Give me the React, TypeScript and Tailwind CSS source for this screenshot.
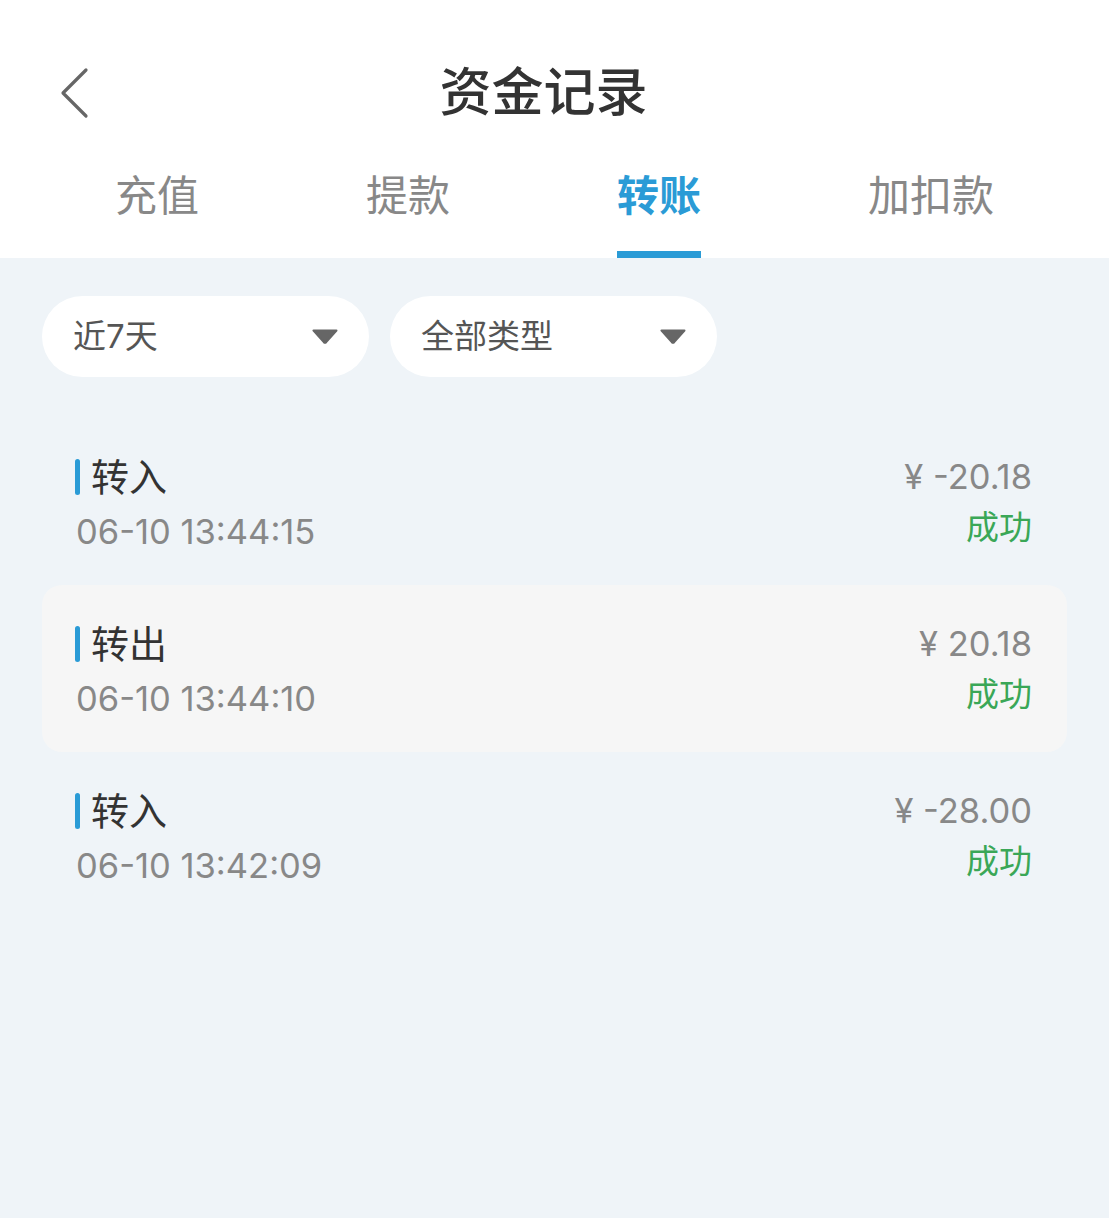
import React from 'react';

const font = { fontFamily: '"Inter", "Noto Sans CJK SC", sans-serif' };

type Rec = { title: string; time: string; amount: string; status: string; active?: boolean };

const records: Rec[] = [
  { title: '转入', time: '06-10 13:44:15', amount: '¥ -20.18', status: '成功' },
  { title: '转出', time: '06-10 13:44:10', amount: '¥ 20.18', status: '成功', active: true },
  { title: '转入', time: '06-10 13:42:09', amount: '¥ -28.00', status: '成功' },
];

const tabs = ['充值', '提款', '转账', '加扣款'];

const Caret: React.FC = () => (
  <svg width="26" height="15" viewBox="0 0 26 15" className="shrink-0">
    <path d="M1.5 1.5 H24.5 L14.2 13.2 Q13 14.4 11.8 13.2 Z" fill="#666" stroke="#666" strokeWidth="2" strokeLinejoin="round" />
  </svg>
);

export default function App() {
  return (
    <div className="w-[1109px] min-h-[1218px] bg-[#eff4f8]" style={font}>
      <header className="bg-white">
        <div className="relative h-[150px] flex items-center justify-center pr-[22px]">
          <button className="absolute left-[58px] top-[66px]">
            <svg width="34" height="54" viewBox="0 0 34 54">
              <path d="M28 4 L5 27 L28 50" fill="none" stroke="#666" strokeWidth="3.2" strokeLinecap="round" strokeLinejoin="round" />
            </svg>
          </button>
          <h1 className="text-[52px] font-medium text-[#333] mt-[36px]">资金记录</h1>
        </div>
        <nav className="flex gap-[167px] pl-[115px] h-[108px]">
          {tabs.map((t, i) => (
            <div key={t} className="flex flex-col items-center">
              <span
                className={
                  'text-[42px] leading-none mt-[25px] ' +
                  (i === 2 ? 'text-[#2a9bd6] font-bold' : 'text-[#888]')
                }
              >
                {t}
              </span>
              {i === 2 && <span className="mt-[34px] w-[84px] h-[7px] bg-[#2a9bd6]" />}
            </div>
          ))}
        </nav>
      </header>

      <div className="flex gap-[21px] pl-[42px] pt-[38px]">
        {['近7天', '全部类型'].map((s) => (
          <div
            key={s}
            className="w-[327px] h-[81px] bg-white rounded-full flex items-center justify-between pl-[31px] pr-[31px]"
          >
            <span className="text-[33px] text-[#555]">{s}</span>
            <Caret />
          </div>
        ))}
      </div>

      <ul className="mt-[41px] px-[42px]">
        {records.map((r, i) => (
          <li
            key={i}
            className={
              'h-[167px] rounded-[20px] flex items-center justify-between pl-[33px] pr-[35px] ' +
              (r.active ? 'bg-[#f6f6f6]' : '')
            }
          >
            <div className="flex flex-col">
              <div className="flex items-center">
                <span className="w-[5px] h-[36px] rounded-full bg-[#2a9bd6] mr-[11px]" />
                <span className="text-[38px] leading-[50px] text-[#333]">{r.title}</span>
              </div>
              <span className="text-[34.5px] leading-[40px] text-[#888] mt-[10px] ml-[1px]">{r.time}</span>
            </div>
            <div className="flex flex-col items-end">
              <span className="text-[34.5px] leading-[44px] text-[#888]">{r.amount}</span>
              <span className="text-[33px] leading-[44px] text-[#3aa757] mt-[6px]">{r.status}</span>
            </div>
          </li>
        ))}
      </ul>
    </div>
  );
}
